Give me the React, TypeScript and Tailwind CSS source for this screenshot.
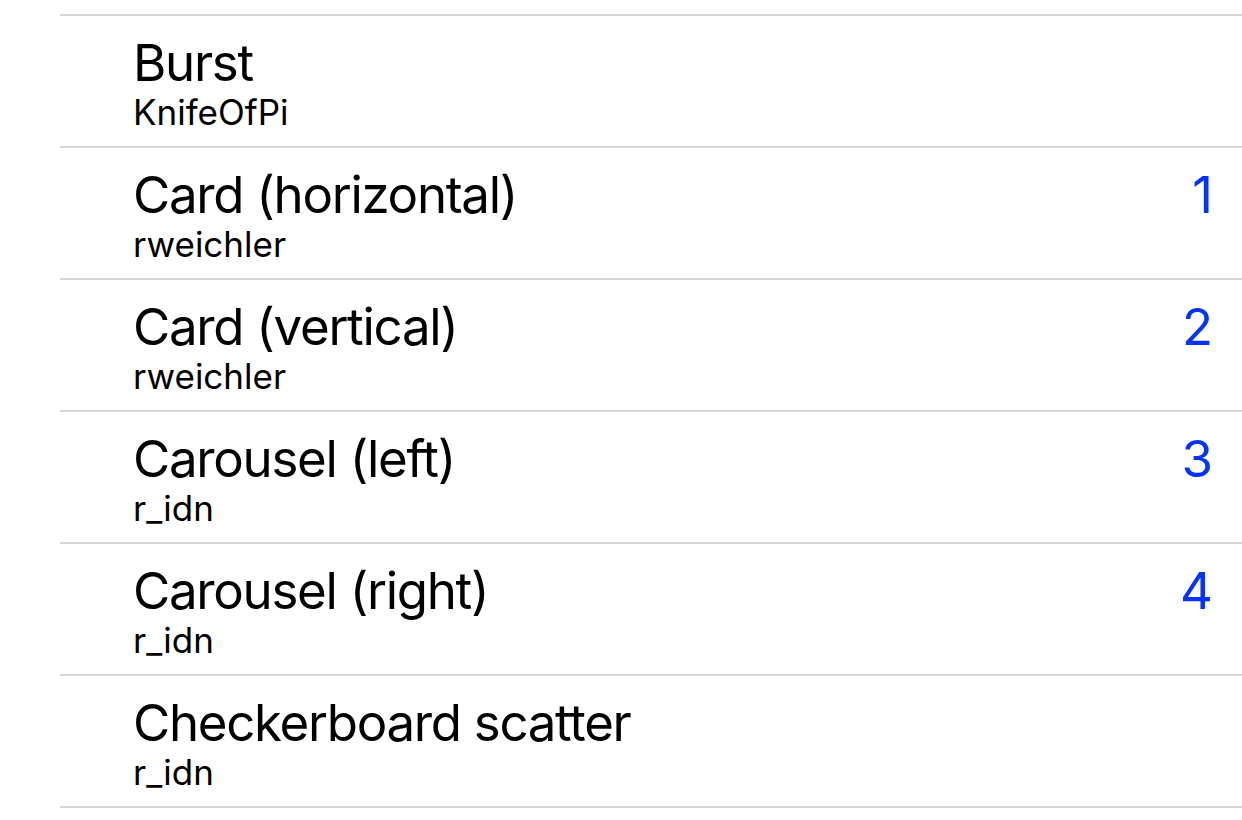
const rows = [
  { title: 'Burst', author: 'KnifeOfPi', badge: '' },
  { title: 'Card (horizontal)', author: 'rweichler', badge: '1' },
  { title: 'Card (vertical)', author: 'rweichler', badge: '2' },
  { title: 'Carousel (left)', author: 'r_idn', badge: '3' },
  { title: 'Carousel (right)', author: 'r_idn', badge: '4' },
  { title: 'Checkerboard scatter', author: 'r_idn', badge: '' },
];

function Row({ title, author, badge }: { title: string; author: string; badge: string }) {
  return (
    <div className="flex h-[132px] items-start border-b-2 border-[#d6d5d9] pl-[73px] pr-[30px]">
      <div className="flex flex-1 flex-col">
        <div className="mt-[17px] text-[51px] leading-[60px] tracking-[-1.3px] text-black">{title}</div>
        <div className="mt-[-3px] text-[35px] leading-[44px] text-black">{author}</div>
      </div>
      {badge && (
        <div className="mt-[17px] text-[51px] leading-[60px] tracking-[-1px] text-[#0433ff]">{badge}</div>
      )}
    </div>
  );
}

export default function App() {
  return (
    <div className="min-h-[820px] w-[1242px] bg-white font-['Inter',sans-serif]">
      <div className="ml-[60px]">
        <div className="h-[16px] border-b-2 border-[#d6d5d9]" />
        {rows.map((row) => (
          <Row key={row.title} {...row} />
        ))}
      </div>
    </div>
  );
}
